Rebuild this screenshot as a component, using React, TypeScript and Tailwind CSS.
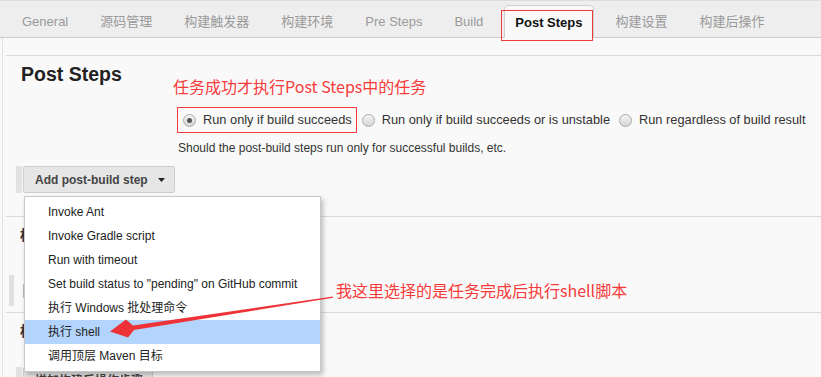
import React from 'react';

const FONT = { fontFamily: '"Liberation Sans", Arial, "Noto Sans CJK SC", sans-serif' };

const tabs = ['General', '源码管理', '构建触发器', '构建环境', 'Pre Steps', 'Build'];
const tabsAfter = ['构建设置', '构建后操作'];

const menuItems = [
  'Invoke Ant',
  'Invoke Gradle script',
  'Run with timeout',
  'Set build status to "pending" on GitHub commit',
  '执行 Windows 批处理命令',
  '执行 shell',
  '调用顶层 Maven 目标',
];

/* ── radio ─────────────────────────────────────────────── */
function Radio({ checked }: { checked?: boolean }) {
  return (
    <span className="flex h-[13px] w-[13px] shrink-0 items-center justify-center rounded-full border border-[#a9a9a9] bg-gradient-to-b from-[#f4f4f4] to-[#d6d6d6]">
      {checked && <span className="h-[5px] w-[5px] rounded-full bg-[#555]" />}
    </span>
  );
}

/* ── tab bar ───────────────────────────────────────────── */
function TabBar() {
  return (
    <div className="flex h-[38px] items-end border-t border-b border-t-[#dddddd] border-b-[#cccccc] bg-[#eeeeee] pl-[6px]">
      {tabs.map((t) => (
        <div key={t} className="flex h-[31px] items-center px-4 text-[13px] text-[#9a9a9a]">
          {t}
        </div>
      ))}
      <div className="relative ml-[5px] mb-[-1px] flex h-[33px] items-center rounded-t-[5px] border border-b-0 border-[#cfcfcf] bg-[#f9f9f9] px-[10px] pt-[2px] text-[13px] font-bold text-[#111]">
        Post Steps
      </div>
      <div className="w-[6px]" />
      {tabsAfter.map((t) => (
        <div key={t} className="flex h-[31px] items-center px-4 text-[13px] text-[#9a9a9a]">
          {t}
        </div>
      ))}
    </div>
  );
}

/* ── button with left strip ────────────────────────────── */
function StepButton({ label, arrow }: { label: string; arrow?: boolean }) {
  return (
    <div className="flex items-stretch pl-[10px]">
      <div className="w-[6px] bg-[#e2e2e2]" />
      <div className="ml-[1px] flex h-[27px] items-center rounded-[2px] border border-[#cdcdcd] bg-[#e6e6e6] pl-[11px] pr-[9px] text-[12px] font-bold text-[#444]">
        {label}
        {arrow && (
          <svg className="ml-[10px]" width="7" height="4" viewBox="0 0 7 4">
            <path d="M0 0h7L3.5 4z" fill="#222" />
          </svg>
        )}
      </div>
    </div>
  );
}

/* ── dropdown menu ─────────────────────────────────────── */
function Menu() {
  return (
    <div className="absolute left-[24px] top-[196px] w-[297px] border border-[#c8c8c8] bg-white py-[3px] shadow-[2px_3px_5px_rgba(0,0,0,0.25)]">
      {menuItems.map((m) => (
        <div
          key={m}
          className={`flex h-[24px] items-center pl-[23px] text-[12px] text-[#222] ${
            m === '执行 shell' ? 'bg-[#b3d4fc]' : ''
          }`}
        >
          {m}
        </div>
      ))}
    </div>
  );
}

export default function App() {
  return (
    <div style={FONT} className="relative h-[377px] w-[821px] overflow-hidden bg-[#f9f9f9] text-[#333]">
      <TabBar />

      <div className="ml-[2px] h-[339px] border-l border-[#e2e2e2] pl-[3px]">
        <div className="h-[17px]" />

        {/* ── Post Steps section ── */}
        <div className="border-t border-[#dadada] pb-[23px] pt-[6px]">
          <h2 className="pl-[15px] text-[19.5px] font-bold leading-[24px] text-[#222]">Post Steps</h2>

          <div className="mt-[21px] flex items-center pl-[171px] text-[12.8px] text-[#333]">
            <label className="flex h-[26px] items-center gap-[7px] border border-[#f03a3a] pl-[5px] pr-[4px]">
              <Radio checked />
              <span>Run only if build succeeds</span>
            </label>
            <label className="ml-[5px] flex items-center gap-[7px]">
              <Radio />
              <span>Run only if build succeeds or is unstable</span>
            </label>
            <label className="ml-[9px] flex items-center gap-[7px]">
              <Radio />
              <span>Run regardless of build result</span>
            </label>
          </div>

          <p className="mt-[7px] pl-[172px] text-[12px] leading-[16px] text-[#333]">
            Should the post-build steps run only for successful builds, etc.
          </p>

          <div className="mt-[10px]">
            <StepButton label="Add post-build step" arrow />
          </div>
        </div>

        {/* ── section hidden behind menu ── */}
        <div className="h-[96px] border-t border-[#dadada] pl-[14px] pt-[9px]">
          <div className="text-[14px] font-bold leading-[18px] text-[#333]">构建设置</div>
          <div className="mt-[31px] flex items-center">
            <div className="ml-[-11px] h-[31px] w-[5px] bg-[#e0e0e0]" />
            <div className="ml-[9px] h-[14px] w-[14px] border border-[#bbb] bg-white" />
          </div>
        </div>

        {/* ── post-build actions section ── */}
        <div className="border-t border-[#dadada] pt-[9px]">
          <div className="pl-[14px] text-[14px] font-bold leading-[18px] text-[#333]">构建后操作</div>
          <div className="mt-[27px]">
            <StepButton label="增加构建后操作步骤" />
          </div>
        </div>
      </div>

      <Menu />

      {/* ── annotations ── */}
      <div className="pointer-events-none absolute left-[501px] top-[10px] h-[31px] w-[92px] border border-[#f03a3a]" />
      <div
        className="absolute left-[173px] top-[76px] text-[16px] leading-[20px] text-[#f63b3b]"
        style={{ fontFamily: '"Noto Sans CJK SC", "Liberation Sans", sans-serif' }}
      >
        任务成功才执行Post Steps中的任务
      </div>
      <div
        className="absolute left-[336px] top-[280px] text-[16px] leading-[20px] text-[#f63b3b]"
        style={{ fontFamily: '"Noto Sans CJK SC", "Liberation Sans", sans-serif' }}
      >
        我这里选择的是任务完成后执行shell脚本
      </div>
      <svg className="pointer-events-none absolute left-0 top-0" width="821" height="377">
        <polygon
          points="333,296.6 133,325.6 126,319.5 110,331.5 128,337.5 134,330 333,297.8"
          fill="#ee3338"
        />
      </svg>
    </div>
  );
}
